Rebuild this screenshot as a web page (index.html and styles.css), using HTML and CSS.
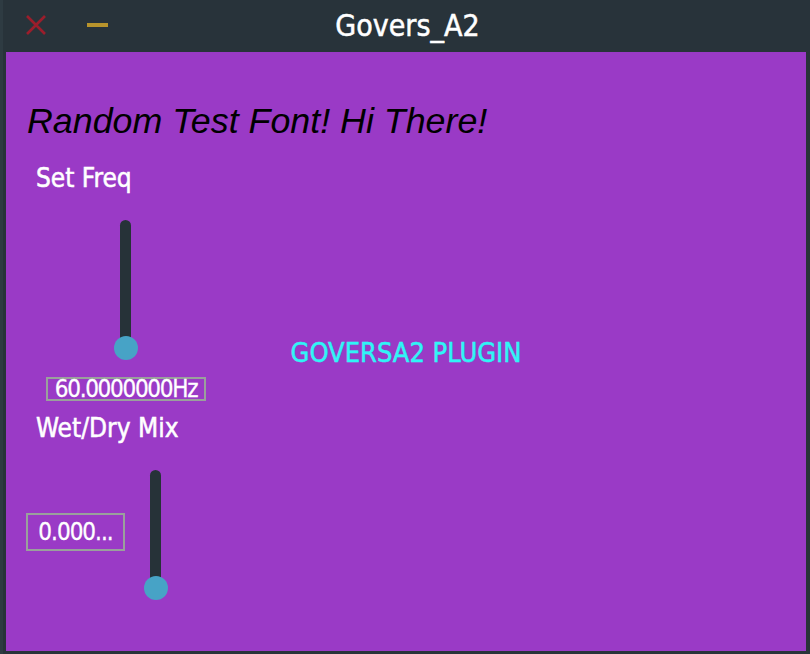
FILE: index.html
```html
<!DOCTYPE html>
<html>
<head>
<meta charset="utf-8">
<link rel="stylesheet" href="styles.css">
</head>
<body>
<div class="window">
  <div class="titlebar">
    <div class="controls">
      <svg class="close" width="22" height="22" viewBox="0 0 22 22"><path d="M2 2 L20 20 M20 2 L2 20" stroke="#9b1d2b" stroke-width="2.6" fill="none"/></svg>
      <span class="minimize"></span>
    </div>
    <div class="title">Govers_A2</div>
  </div>
  <div class="panel">
    <h1 class="heading">Random Test Font! Hi There!</h1>
    <div class="row">
      <div class="group freq">
        <div class="label">Set Freq</div>
        <div class="vslider freq-slider">
          <div class="track"></div>
          <div class="thumb"></div>
        </div>
        <div class="valuebox freq-box">60.0000000Hz</div>
      </div>
      <div class="plugin-name">GOVERSA2 PLUGIN</div>
      <div></div>
    </div>
    <div class="group mix">
      <div class="label">Wet/Dry Mix</div>
      <div class="mix-row">
        <div class="valuebox mix-box">0.000...</div>
        <div class="vslider mix-slider">
          <div class="track"></div>
          <div class="thumb"></div>
        </div>
      </div>
    </div>
  </div>
</div>
</body>
</html>
```
FILE: styles.css
```css
html, body {
  margin: 0;
  padding: 0;
  background: #28333a;
}
.window {
  width: 810px;
  height: 654px;
  background: #28333a;
  display: flex;
  flex-direction: column;
  box-sizing: border-box;
  border-left: 3px solid #2e3b42;
  overflow: hidden;
}
.titlebar {
  height: 52px;
  position: relative;
  display: flex;
  align-items: center;
  justify-content: center;
  flex: none;
}
.controls {
  position: absolute;
  left: 22px;
  top: 14px;
  display: flex;
  align-items: center;
  gap: 40px;
}
.close { display: block; }
.minimize {
  display: block;
  width: 21px;
  height: 4px;
  background: #b8942c;
  margin-top: -1px;
}
.title {
  font-family: "DejaVu Sans Condensed", "DejaVu Sans", sans-serif;
  font-size: 30px;
  color: #ffffff;
  line-height: 30px;
  margin-left: 2px;
  -webkit-text-stroke: 0.5px #ffffff;
}
.panel {
  flex: 1;
  margin: 0 4px 3px 3px;
  background: #9a3ac6;
  display: flex;
  flex-direction: column;
}
.heading {
  margin: 49px 0 0 21px;
  font-family: "Liberation Sans", Arial, sans-serif;
  font-style: italic;
  font-weight: normal;
  font-size: 35.8px;
  line-height: 40px;
  color: #000;
}
.row {
  display: grid;
  grid-template-columns: 1fr auto 1fr;
  align-items: start;
}
.group { display: flex; flex-direction: column; }
.label {
  font-family: "DejaVu Sans Condensed", "DejaVu Sans", sans-serif;
  font-size: 26px;
  line-height: 28px;
  color: #fff;
  margin-left: 30px;
  -webkit-text-stroke: 0.5px #ffffff;
}
.freq .label { margin-top: 23px; }
.vslider {
  position: relative;
  width: 24px;
}
.track {
  position: absolute;
  left: 6px;
  top: 0;
  width: 11px;
  bottom: 12px;
  border-radius: 6px;
  background: #263238;
}
.thumb {
  position: absolute;
  left: 0;
  bottom: 0;
  width: 24px;
  height: 24px;
  border-radius: 50%;
  background: #47a3c6;
}
.freq-slider {
  height: 140px;
  margin: 28px 0 0 108px;
}
.valuebox {
  box-sizing: border-box;
  border: 2px solid #9aa09c;
  color: #fff;
  font-family: "DejaVu Sans Condensed", "DejaVu Sans", sans-serif;
  font-size: 24px;
  letter-spacing: -1px;
  display: flex;
  align-items: center;
  justify-content: center;
  -webkit-text-stroke: 0.3px #ffffff;
}
.freq-box {
  width: 160px;
  height: 24px;
  margin: 17px 0 0 40px;
  letter-spacing: -1.3px;
}
.plugin-name {
  margin-top: 196px;
  font-family: "DejaVu Sans Condensed", "DejaVu Sans", sans-serif;
  font-size: 27px;
  line-height: 32px;
  color: #2ff5f6;
  -webkit-text-stroke: 0.5px #2ff5f6;
}
.mix .label { margin-top: 13px; }
.mix-row {
  display: flex;
  align-items: flex-start;
  margin-left: 20px;
}
.mix-box {
  width: 99px;
  height: 38px;
  margin-top: 71px;
}
.mix-slider {
  height: 130px;
  margin-left: 19px;
  margin-top: 28px;
}
```
